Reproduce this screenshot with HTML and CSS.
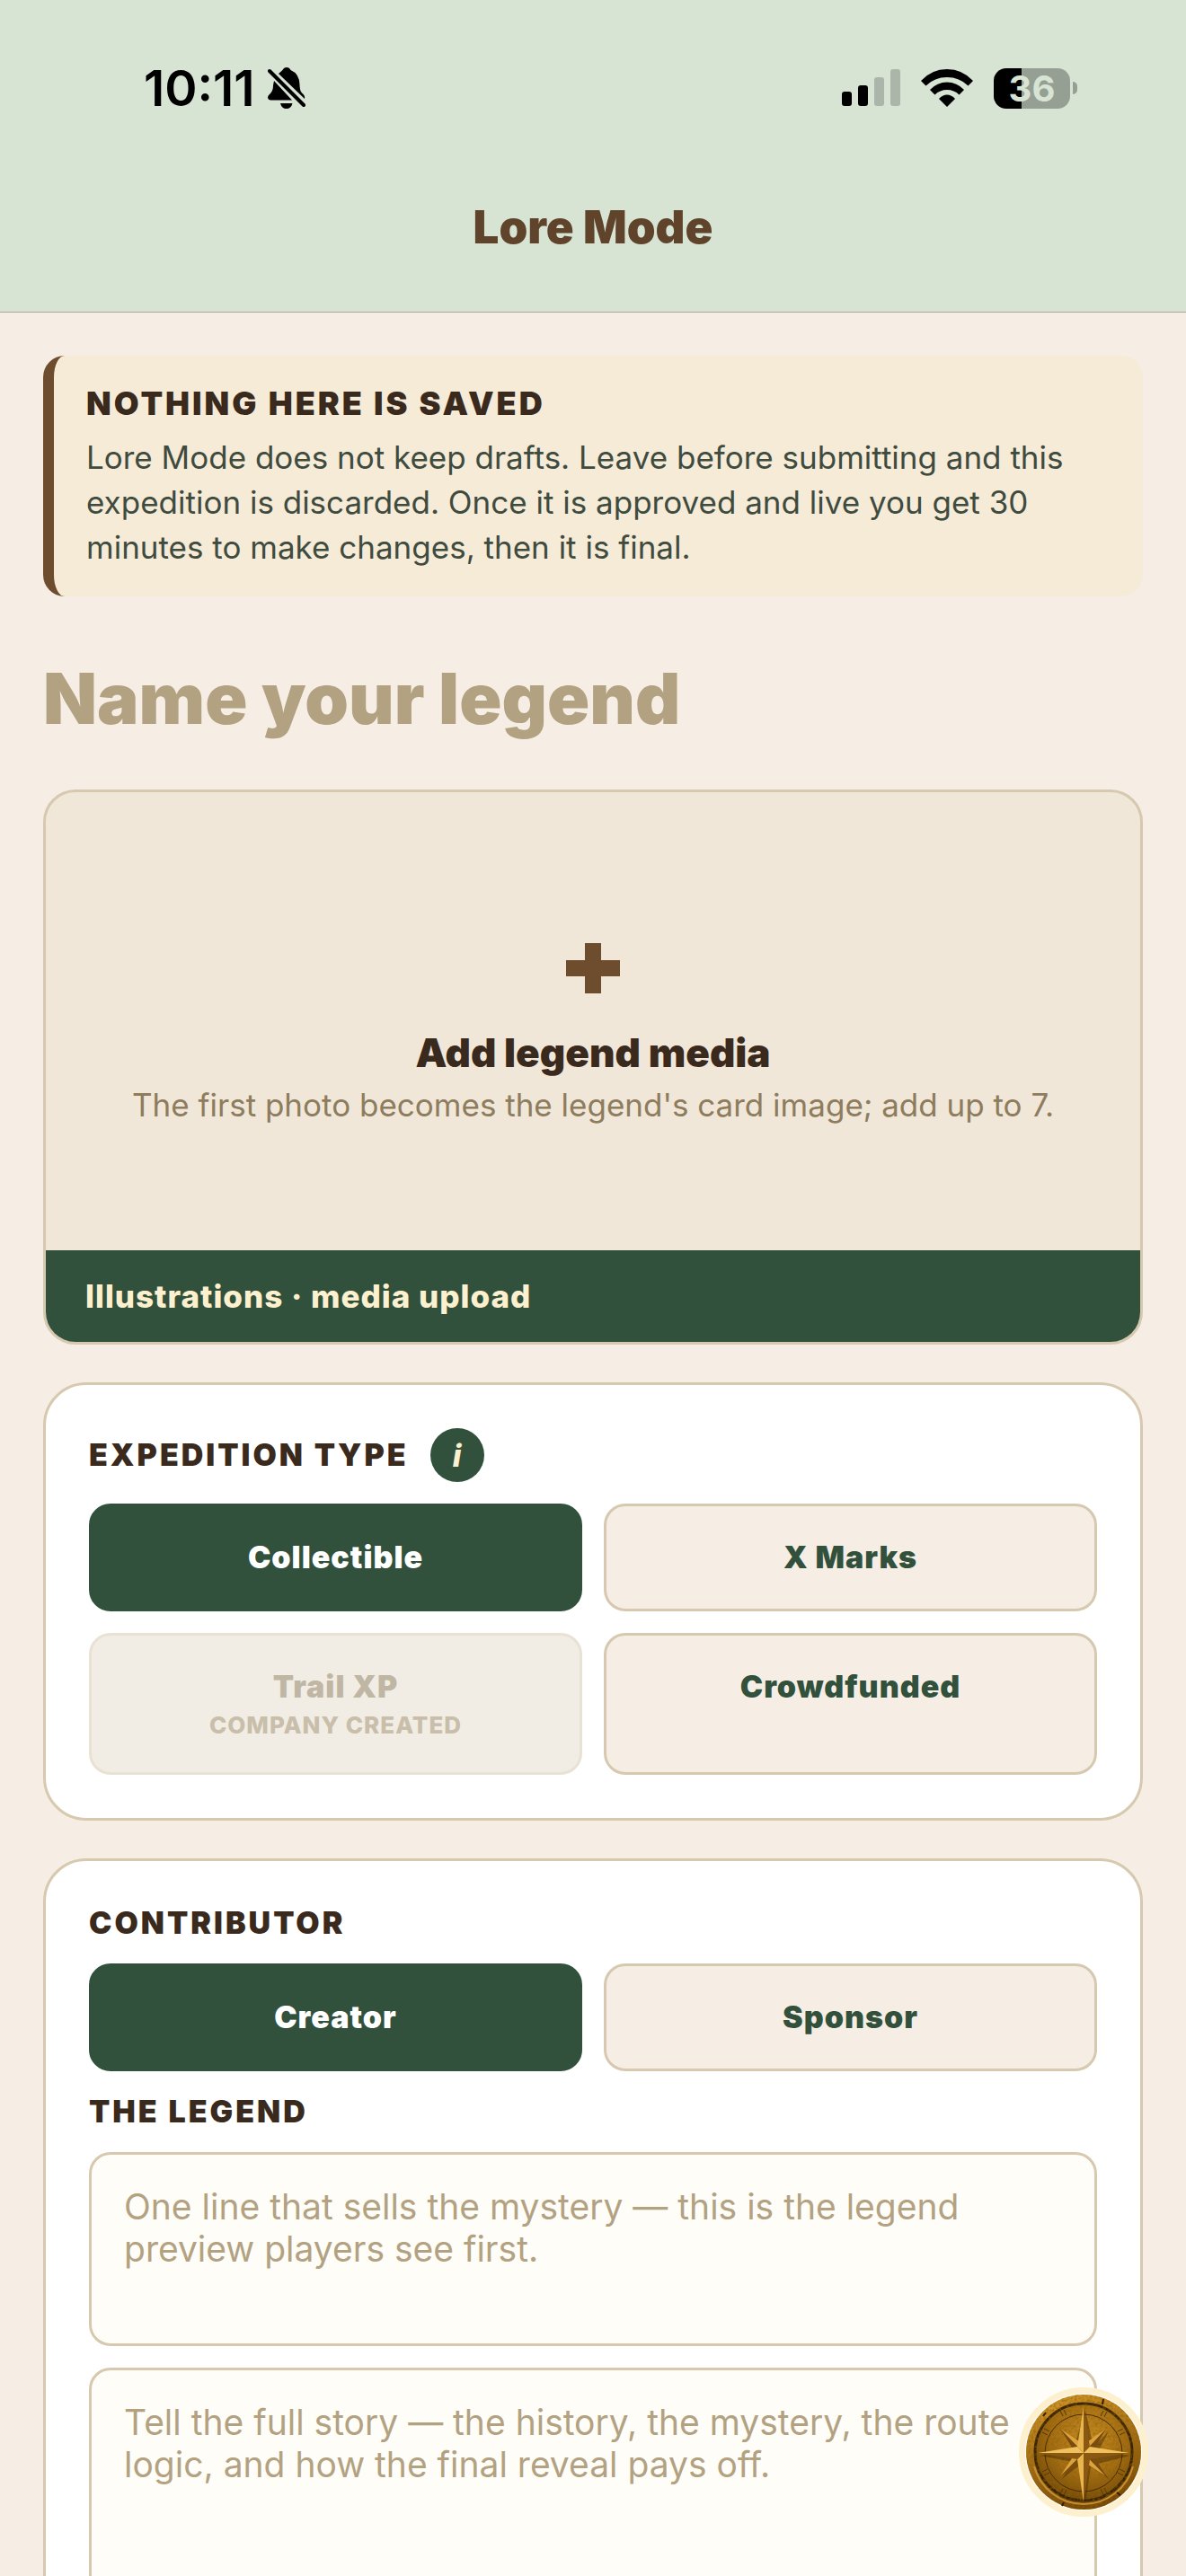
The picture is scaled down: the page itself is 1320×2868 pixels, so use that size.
FILE: index.html
```html
<!DOCTYPE html>
<html lang="en">
<head>
    <meta charset="UTF-8">
    <meta name="viewport" content="width=device-width, initial-scale=1.0">
    <title>Lore Mode</title>
    <link rel="stylesheet" href="styles.css">
</head>
<body>
<div class="app">

    <header class="header">
        <!-- Status bar -->
        <div class="status-bar">
            <div class="status-left">
                <span class="time">10:11</span>
                <svg class="bell" viewBox="0 0 42 46" aria-hidden="true">
                    <path d="M7 15 L27 36.500 H3 Q0 36 0 33 Q0.500 31 3 29 Q6 26 6 20 Z"/>
                    <path d="M12 7 Q15 4.500 16.500 3 Q18 0 21 0 Q24 0 25.500 3 Q35 7 35.500 19 Q35.500 26 38 28.500 Q42 31.500 41 35 Z"/>
                    <path d="M14 40 H27.500 Q26 46 20.700 46 Q15.500 46 14 40 Z"/>
                    <path class="bell-slash" d="M2 4 L40 42"/>
                </svg>
            </div>
            <div class="status-right">
                <svg class="signal" viewBox="0 0 65 42" aria-hidden="true">
                    <rect x="0" y="25" width="11" height="16" rx="3"/>
                    <rect x="18" y="18" width="11" height="23" rx="3"/>
                    <rect class="off" x="36" y="9" width="11" height="32" rx="3"/>
                    <rect class="off" x="54" y="0" width="11" height="41" rx="3"/>
                </svg>
                <svg class="wifi" viewBox="0 0 58 42" aria-hidden="true">
                    <path d="M0 13 Q12 0 29 0 Q46 0 58 13 L52.500 18.500 Q43 9 29 9 Q15 9 5.500 18.500 Z"/>
                    <path d="M10 23 Q18 14.500 29 14.500 Q40 14.500 48 23 L42.500 28.500 Q37 23 29 23 Q21 23 15.500 28.500 Z"/>
                    <path d="M20 33 Q24 28.500 29 28.500 Q34 28.500 38 33 L29 42 Z"/>
                </svg>
                <div class="battery">
                    <span class="battery-body">36</span>
                    <span class="battery-cap"></span>
                </div>
            </div>
        </div>
        <h1 class="page-title">Lore Mode</h1>
    </header>

    <main class="content">

        <!-- Draft warning -->
        <section class="notice">
            <h2 class="notice-title">NOTHING HERE IS SAVED</h2>
            <p class="notice-text">Lore Mode does not keep drafts. Leave before submitting and this expedition is discarded. Once it is approved and live you get 30 minutes to make changes, then it is final.</p>
        </section>

        <input type="text" class="legend-name" placeholder="Name your legend" aria-label="Name your legend">

        <!-- Media upload -->
        <section class="media">
            <button type="button" class="media-add">
                <svg class="plus" viewBox="0 0 60 56" aria-hidden="true">
                    <path d="M21 0 H39 V19 H60 V37 H39 V56 H21 V37 H0 V19 H21 Z"/>
                </svg>
                <span class="media-title">Add legend media</span>
                <span class="media-hint">The first photo becomes the legend's card image; add up to 7.</span>
            </button>
            <div class="media-footer">Illustrations · media upload</div>
        </section>

        <!-- Expedition type -->
        <section class="card">
            <div class="label-row">
                <h2 class="label">EXPEDITION TYPE</h2>
                <button type="button" class="info" aria-label="About expedition types">i</button>
            </div>
            <div class="options">
                <button type="button" class="option selected">Collectible</button>
                <button type="button" class="option">X Marks</button>
                <button type="button" class="option" disabled>Trail XP<span class="option-note">COMPANY CREATED</span></button>
                <button type="button" class="option">Crowdfunded</button>
            </div>
        </section>

        <!-- Contributor and legend text -->
        <section class="card">
            <h2 class="label">CONTRIBUTOR</h2>
            <div class="options">
                <button type="button" class="option selected">Creator</button>
                <button type="button" class="option">Sponsor</button>
            </div>
            <label class="label" for="preview">THE LEGEND</label>
            <textarea id="preview" class="field" placeholder="One line that sells the mystery — this is the legend preview players see first."></textarea>
            <textarea class="field field-story" aria-label="Full story" placeholder="Tell the full story — the history, the mystery, the route logic, and how the final reveal pays off."></textarea>
        </section>

    </main>

    <!-- Floating compass button -->
    <button type="button" class="compass" aria-label="Open compass">
        <svg viewBox="0 0 128 128" aria-hidden="true">
            <defs>
                <linearGradient id="rim" x1="0.300" y1="0" x2="0.600" y2="1">
                    <stop offset="0" stop-color="#d2952a"/>
                    <stop offset="0.500" stop-color="#a36c16"/>
                    <stop offset="1" stop-color="#754506"/>
                </linearGradient>
                <radialGradient id="face" cx="0.550" cy="0.350" r="0.650">
                    <stop offset="0" stop-color="#c98c24"/>
                    <stop offset="0.600" stop-color="#a46c14"/>
                    <stop offset="1" stop-color="#754a0a"/>
                </radialGradient>
                <filter id="grain" x="0" y="0" width="1" height="1">
                    <feTurbulence type="fractalNoise" baseFrequency="0.350" numOctaves="2"/>
                    <feColorMatrix values="0 0 0 0 0.250  0 0 0 0 0.130  0 0 0 0 0  1.600 0 0 0 -0.650"/>
                    <feComposite in2="SourceGraphic" operator="in"/>
                </filter>
            </defs>
            <circle cx="64" cy="64" r="64" fill="url(#rim)"/>
            <circle cx="64" cy="64" r="54" fill="url(#face)" stroke="#3a2204" stroke-width="3"/>
            <circle cx="64" cy="64" r="64" filter="url(#grain)"/>
            <path d="M9 80 A57 57 0 0 0 119 80" fill="none" stroke="#c58f36" stroke-width="2"/>
            <circle cx="64" cy="65" r="43" fill="none" stroke="#4a2c05" stroke-width="1"/>
            <g stroke="#573608" stroke-width="1">
                <path d="M38 18 L41 24 M42 17 L45 23 M83 24 L86 18 M87 25 L90 19"/>
                <path d="M18 42 L24 45 M20 38 L26 41 M104 45 L110 42 M102 41 L108 38"/>
                <path d="M18 86 L24 83 M20 90 L26 87 M104 83 L110 86 M102 87 L108 90"/>
                <path d="M38 111 L41 105 M42 112 L45 106 M83 105 L86 111 M87 104 L90 110"/>
            </g>
            <path d="M86 5 L85 11 M22 20 L19 24 M105 112 L101 109 M42 120 L40 124" stroke="#351d03" stroke-width="2"/>
            <!-- star shadow -->
            <path d="M66 18 L75 58 L92 41 L81 62 L116 68 L80 77 L92 94 L72 80 L66 121 L59 79 L40 94 L52 75 L15 68 L52 63 Z" fill="#4a2c05" opacity="0.500"/>
            <!-- short points -->
            <path d="M38 38 L59 52 L64 65 Z M89 91 L69 78 L64 65 Z M89 38 L69 52 L64 65 Z M38 91 L51 71 L64 65 Z" fill="#dca33c"/>
            <path d="M38 38 L64 65 L51 59 Z M89 38 L64 65 L77 59 Z M38 91 L64 65 L59 78 Z M89 91 L64 65 L77 71 Z" fill="#7a4d0e"/>
            <!-- long points -->
            <path d="M64 13 L57 58 L64 65 Z M64 120 L57 72 L64 65 Z" fill="#e9b54e"/>
            <path d="M64 13 L71 58 L64 65 Z M64 120 L71 72 L64 65 Z" fill="#8a5810"/>
            <path d="M13 65 L57 58 L64 65 Z M115 65 L71 58 L64 65 Z" fill="#efc05c"/>
            <path d="M13 65 L57 72 L64 65 Z M115 65 L71 72 L64 65 Z" fill="#8a5810"/>
        </svg>
    </button>

</div>
</body>
</html>
```
FILE: styles.css
```css
* {
    box-sizing: border-box;
}

body {
    margin: 0;
    background-color: #f6eee4;
    color: #3a2a1e;
    font-family: Inter, "Noto Sans", sans-serif;
}

h1, h2, p {
    margin: 0;
}

button, input, textarea {
    font-family: inherit;
    margin: 0;
}

.app {
    height: 100vh;
    overflow: hidden;
}

/* Header */
.header {
    background-color: #d7e3d3;
    border-bottom: 1px solid #a9a9a2;
}

.status-bar {
    display: flex;
    justify-content: space-between;
    align-items: center;
    height: 196px;
    padding: 0 121px 0 160px;
}

.status-left,
.status-right {
    display: flex;
    align-items: center;
}

.status-left {
    gap: 14px;
}

.status-right {
    gap: 23px;
}

.time {
    color: #000;
    font-size: 55px;
    font-weight: 600;
    line-height: 64px;
}

.bell {
    width: 42px;
    height: 46px;
}

.bell-slash {
    stroke: #000;
    stroke-width: 4;
    stroke-linecap: round;
}

.signal {
    width: 65px;
    height: 42px;
}

.off {
    fill: #abb5a9;
}

.wifi {
    width: 58px;
    height: 42px;
}

.battery {
    display: flex;
    align-items: center;
    gap: 3px;
}

.battery-body {
    width: 85px;
    border-radius: 14px;
    background: linear-gradient(to right, #000 36%, #959f93 36%);
    color: #d7e3d3;
    font-size: 40px;
    font-weight: 700;
    line-height: 45px;
    text-align: center;
}

.battery-cap {
    width: 5px;
    height: 14px;
    border-radius: 0 5px 5px 0;
    background-color: #959f93;
}

.page-title {
    height: 151px;
    color: #5f432a;
    font-size: 51px;
    font-weight: 900;
    line-height: 114px;
    text-align: center;
}

/* Page content */
.content {
    display: flex;
    flex-direction: column;
    padding: 48px;
}

.notice {
    padding: 30px 36px;
    border-left: 12px solid #6e4c2e;
    border-radius: 24px;
    background-color: #f6ebd7;
}

.notice-title {
    font-size: 36px;
    font-weight: 900;
    line-height: 46px;
    letter-spacing: 3px;
    margin-bottom: 12px;
}

.notice-text {
    color: #3f4b3f;
    font-size: 35px;
    line-height: 50px;
}

.legend-name {
    width: 100%;
    height: 107px;
    margin: 60px 0 48px;
    padding: 0;
    border: none;
    background: none;
    color: #3a2a1e;
    font-size: 78px;
    font-weight: 900;
}

.legend-name::placeholder,
.field::placeholder {
    color: #b3a282;
    opacity: 1;
}

/* Media upload */
.media {
    border: 3px solid #d7c9af;
    border-radius: 36px;
    background-color: #f0e7d8;
    overflow: hidden;
}

.media-add {
    display: flex;
    flex-direction: column;
    align-items: center;
    width: 100%;
    height: 510px;
    padding: 168px 48px 0;
    border: none;
    background: none;
}

.plus {
    width: 60px;
    height: 56px;
    margin-bottom: 38px;
    fill: #6e4c2e;
}

.media-title {
    color: #3a2a1e;
    font-size: 44px;
    font-weight: 900;
    line-height: 56px;
}

.media-hint {
    color: #8d7c5d;
    font-size: 35px;
    line-height: 60px;
}

.media-footer {
    padding: 0 44px;
    background-color: #32513d;
    color: #fdf0cf;
    font-size: 35px;
    font-weight: 800;
    line-height: 102px;
    letter-spacing: 1px;
}

/* Cards */
.card {
    display: flex;
    flex-direction: column;
    gap: 24px;
    margin-top: 42px;
    padding: 48px;
    border: 3px solid #d7c9af;
    border-radius: 48px;
    background-color: #fff;
}

.label-row {
    display: flex;
    align-items: center;
    gap: 24px;
}

.label {
    font-size: 34px;
    font-weight: 900;
    line-height: 42px;
    letter-spacing: 3px;
}

.info {
    width: 60px;
    height: 60px;
    padding: 0;
    border: none;
    border-radius: 50%;
    background-color: #32513d;
    color: #fdf0cf;
    font-size: 34px;
    font-style: italic;
    font-weight: 800;
}

.options {
    display: grid;
    grid-template-columns: 1fr 1fr;
    gap: 24px;
}

.option {
    display: flex;
    flex-direction: column;
    align-items: center;
    justify-content: flex-start;
    padding: 36px 12px;
    border: 3px solid #d7c9af;
    border-radius: 24px;
    background-color: #f6eee4;
    color: #32513d;
    font-size: 34px;
    font-weight: 900;
    line-height: 42px;
    letter-spacing: 1px;
}

.option.selected {
    border-color: #32513d;
    background-color: #32513d;
    color: #fff;
}

.option:disabled {
    border-color: #e9e1d4;
    background-color: #f1ece4;
    color: #bfb6a4;
}

.option-note {
    margin-top: 6px;
    color: #c8beaa;
    font-size: 26px;
    font-weight: 800;
    line-height: 32px;
}

.field {
    display: block;
    width: 100%;
    height: 216px;
    padding: 34px 36px;
    border: 3px solid #d7c9af;
    border-radius: 24px;
    background-color: #fffdf8;
    color: #3a2a1e;
    font-size: 39px;
    line-height: 47px;
    resize: none;
}

.field-story {
    height: 420px;
}

/* Floating button */
.compass {
    position: fixed;
    right: 42px;
    bottom: 66px;
    width: 144px;
    height: 144px;
    padding: 0;
    border: 7px solid #fdf0cf;
    border-radius: 50%;
    background-color: #fff;
}

.compass svg {
    display: block;
    width: 128px;
    height: 128px;
    margin: 1px;
}
```
